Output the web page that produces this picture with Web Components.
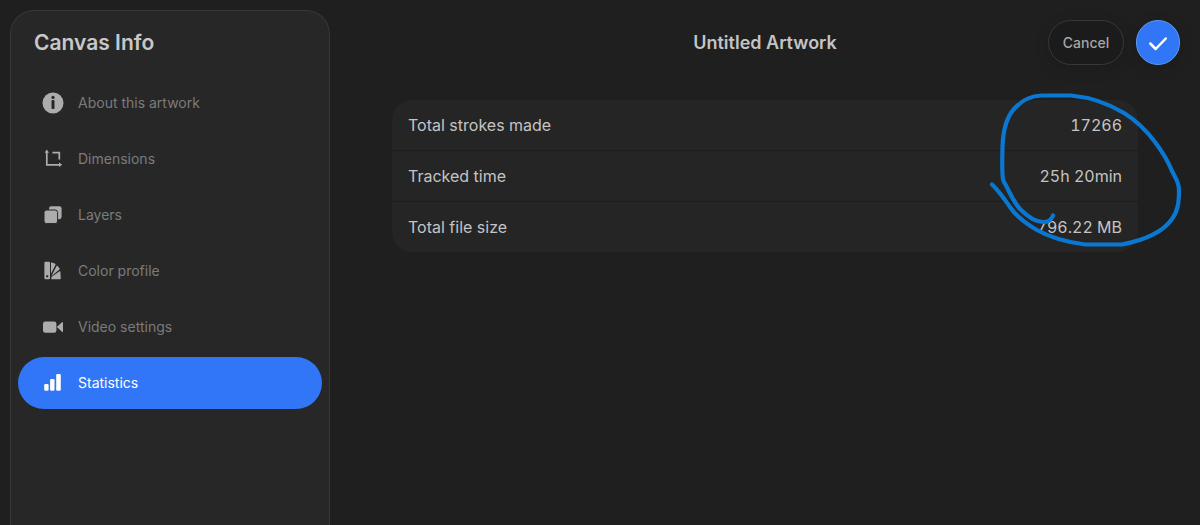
<!DOCTYPE html>
<html lang="en">
<head>
<meta charset="utf-8">
<meta name="viewport" content="width=device-width, initial-scale=1">
<title>Canvas Info</title>
<style>
  body { margin: 0; background: #1f1f1f; color: #c4c4c4; font-family: Inter, "Liberation Sans", sans-serif; }
</style>
</head>
<body>
<canvas-info>
  <info-sidebar slot="sidebar" heading="Canvas Info">
    <nav-item icon="info">About this artwork</nav-item>
    <nav-item icon="crop">Dimensions</nav-item>
    <nav-item icon="layers">Layers</nav-item>
    <nav-item icon="swatch">Color profile</nav-item>
    <nav-item icon="video">Video settings</nav-item>
    <nav-item icon="chart" selected>Statistics</nav-item>
  </info-sidebar>
  <sheet-header>Untitled Artwork</sheet-header>
  <stat-card></stat-card>
</canvas-info>
<script>
const define = (name, html, setup) => customElements.define(name, class extends HTMLElement {
  constructor() {
    super();
    const t = document.createElement('template');
    t.innerHTML = html;
    this.attachShadow({ mode: 'open' }).append(t.content.cloneNode(true));
  }
  connectedCallback() { if (setup) setup(this, this.shadowRoot); }
});

const icons = {
  info: '<circle cx="11" cy="11" r="10.5" fill="currentColor"/><circle cx="11" cy="5.4" r="1.6" fill="#272727"/><rect x="9.5" y="8" width="3" height="9" rx="1" fill="#272727"/>',
  crop: '<path d="M4.8 4v12.8h13M10.4 4.600h6.900v7" fill="none" stroke="currentColor" stroke-width="1.700"/><path d="M4.8 1.500l2.200 3.200H2.600zM20.200 16.800L17 19v-4.400z" fill="currentColor"/>',
  layers: '<rect x="7" y="2.2" width="12.6" height="13" rx="2.4" fill="currentColor"/><rect x="2" y="6" width="13.6" height="13.6" rx="2.6" fill="currentColor" stroke="#272727" stroke-width="1"/>',
  swatch: '<path fill="currentColor" fill-rule="evenodd" d="M3.400 1.800h3.600q1 0 1 1v15.400q0 1-1 1H3.400q-1 0-1-1V2.800q0-1 1-1zM4.200 15.200v2h2v-2z"/><path fill="currentColor" d="M9 2.200l3.800 1.200q1 .4.700 1.300L9 13.800zM14.600 6q.6-.5 1.100 0l1.900 2.400q.4.700-.2 1.200L9.400 16.200zM17.500 11.300q.8-.3.900.6l.4 6.300q0 1-1 1H9.400v-2.300z"/>',
  video: '<rect x="1" y="5.4" width="13.4" height="11.4" rx="2.4" fill="currentColor"/><path d="M14.8 11l5.2-4.8q1-.7 1 .4v8.8q0 1.100-1 .4z" fill="currentColor"/>',
  chart: '<rect x="2.200" y="12" width="4.400" height="6.800" rx="1.200" fill="currentColor"/><rect x="8.100" y="7" width="4.400" height="11.800" rx="1.200" fill="currentColor"/><rect x="14.200" y="2" width="4.600" height="16.800" rx="1.200" fill="currentColor"/>'
};

define('nav-item', `
<style>
  :host { display: block; }
  button { box-sizing: border-box; display: flex; align-items: center; gap: 14px; width: 100%; height: 52px;
    padding: 0 24px; border: 0; border-radius: 26px; background: none; color: #7b7b7b;
    font-family: inherit; font-size: 14px; line-height: 20px; text-align: left; }
  svg { flex: none; width: 22px; height: 22px; color: #acacac; }
  :host([selected]) button { background: #3076f7; color: #fff; }
  :host([selected]) svg { color: #fff; }
</style>
<button type="button"><svg viewBox="0 0 22 22" aria-hidden="true"></svg><span><slot></slot></span></button>`,
(el, root) => {
  root.querySelector('svg').innerHTML = icons[el.getAttribute('icon')];
  if (el.hasAttribute('selected')) root.querySelector('button').setAttribute('aria-current', 'page');
});

define('info-sidebar', `
<style>
  :host { box-sizing: border-box; display: block; padding: 16px 7px; border: 1px solid #373737; border-bottom: 0;
    border-radius: 24px 24px 0 0; background: #272727; }
  h1 { margin: 0 0 18px; padding: 0 16px; font-size: 21px; line-height: 32px; font-weight: 600; color: #c8c8c8; }
  nav { display: flex; flex-direction: column; gap: 4px; }
</style>
<h1></h1><nav><slot></slot></nav>`,
(el, root) => { root.querySelector('h1').textContent = el.getAttribute('heading'); });

define('sheet-header', `
<style>
  :host { display: grid; grid-template-columns: 1fr auto 1fr; align-items: center; padding: 20px; }
  h2 { grid-column: 2; margin: 0; font-size: 18px; line-height: 24px; font-weight: 600; }
  div { display: flex; justify-content: flex-end; gap: 12px; }
  button { box-sizing: border-box; height: 45px; padding: 0; border-radius: 23px; font-family: inherit; font-size: 14px; font-weight: 500; }
  .cancel { width: 76px; border: 1px solid #383838; background: #1b1b1b; color: #a6a6a6; box-shadow: 0 4px 16px #0002; }
  .done { display: grid; place-items: center; width: 44px; border: 1px solid #5a9cf0; background: #3076f7; color: #fff; box-shadow: 0 4px 16px #0002; }
  svg { width: 22px; height: 22px; }
</style>
<h2><slot></slot></h2>
<div>
  <button class="cancel" type="button">Cancel</button>
  <button class="done" type="button" aria-label="Done"><svg viewBox="0 0 22 22" aria-hidden="true"><path d="M3.300 11.500l5.400 5.500L18.800 6.500" fill="none" stroke="currentColor" stroke-width="2.500" stroke-linecap="round" stroke-linejoin="round"/></svg></button>
</div>`);

define('ink-loop', `
<style>
  :host { display: block; width: 200px; height: 160px; pointer-events: none; }
  svg { display: block; width: 100%; height: 100%; }
</style>
<svg viewBox="985 90 200 160" aria-hidden="true"><path fill="none" stroke="#0a78d2" stroke-width="4.200" stroke-linecap="round" stroke-linejoin="round"
 d="M1053 215.500C1051 220 1049 222 1043 222C1035 222 1026 215 1020 209C1012 200 1010 192 1003.500 181C1001.500 176 1002.300 160 1002.500 147C1003 130 1006 118 1014 109C1022 100 1030 95.500 1042 95.500L1071 95.500C1093 97.500 1109 104 1124 113C1137 121 1146 130 1155 142C1164 154 1168 161 1172 171C1176 179 1179 182 1179 190C1179 202 1178 211 1172 219C1163 232 1145 240 1122 244.500L1085 244.500C1066 242 1049 237 1036 229.500C1025 223 1016 216 1010 207C1003 197 999 191 992 184.500"/></svg>`);

define('stat-card', `
<style>
  :host { display: block; position: relative; margin: 15px 62px 0; }
  table { width: 100%; border-collapse: separate; border-spacing: 0; border-radius: 20px; overflow: hidden; background: #252525;
    font-size: 16px; line-height: 20px; }
  th, td { height: 50px; padding: 0 16px; font-weight: 400; }
  th { text-align: left; }
  td { text-align: right; font-variant-numeric: tabular-nums; }
  tr + tr > * { border-top: 1px solid #1c1c1c; }
  ink-loop { position: absolute; top: -10px; right: -47px; }
</style>
<table><tbody>
  <tr><th scope="row">Total strokes made</th><td>17266</td></tr>
  <tr><th scope="row">Tracked time</th><td>25h 20min</td></tr>
  <tr><th scope="row">Total file size</th><td>796.22 MB</td></tr>
</tbody></table>
<ink-loop></ink-loop>`);

define('canvas-info', `
<style>
  :host { display: flex; min-height: 100vh; }
  aside { box-sizing: border-box; display: grid; flex: none; width: 330px; padding: 10px 0 0 10px; }
  main { flex: 1; min-width: 0; }
</style>
<aside><slot name="sidebar"></slot></aside>
<main><slot></slot></main>`);
</script>
</body>
</html>
